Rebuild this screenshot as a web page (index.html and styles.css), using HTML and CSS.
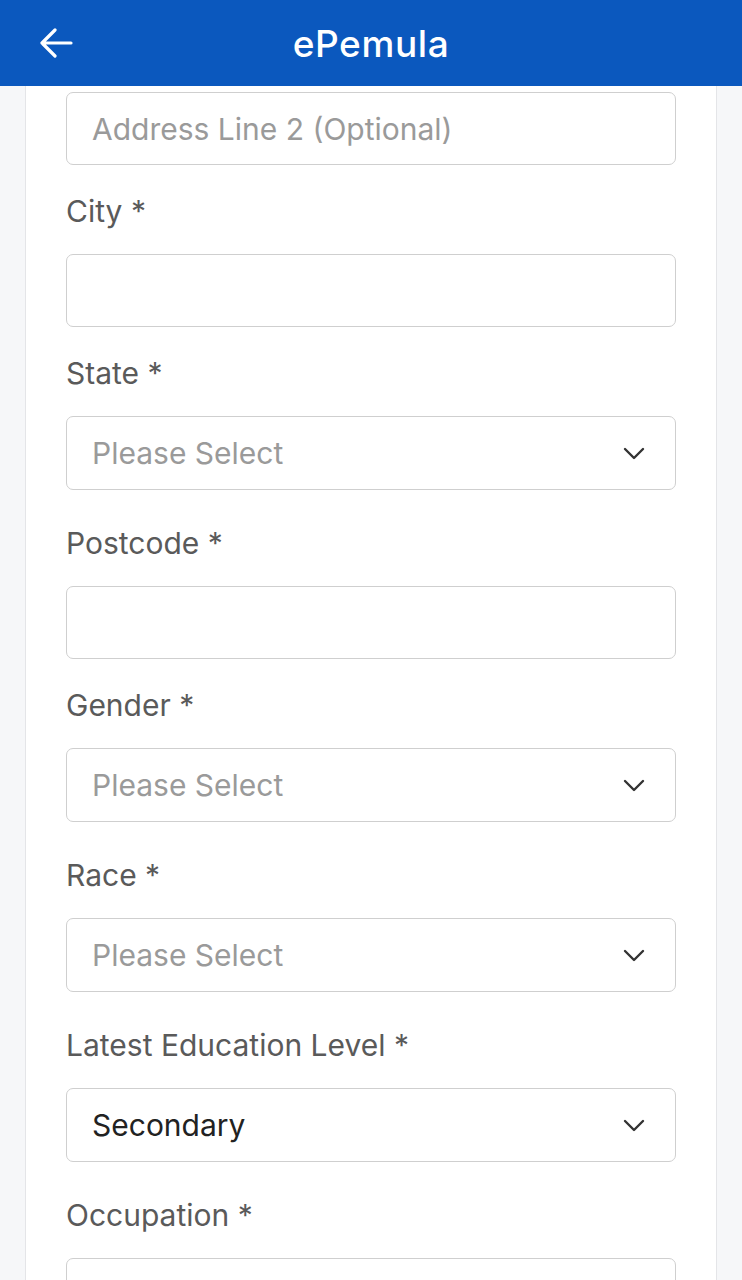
FILE: index.html
```html
<!DOCTYPE html>
<html lang="en">
<head>
<meta charset="utf-8">
<title>ePemula</title>
<link rel="stylesheet" href="styles.css">
</head>
<body>
<header class="appbar">
  <div class="appbar-left">
    <svg class="back" width="34" height="30" viewBox="0 0 34 30" aria-hidden="true">
      <path d="M3 15 H32 M16 2 L3 15 L16 28" fill="none" stroke="#fff" stroke-width="3.2" stroke-linecap="round" stroke-linejoin="round"/>
    </svg>
  </div>
  <div class="title">ePemula</div>
  <div></div>
</header>
<main class="card">
  <form class="form">
    <input class="control" type="text" placeholder="Address Line 2 (Optional)">

    <label class="label">City *</label>
    <input class="control" type="text">

    <label class="label">State *</label>
    <div class="control select"><span class="placeholder">Please Select</span><svg class="chev" width="22" height="13" viewBox="0 0 22 13"><path d="M2 2 L11 11 L20 2" fill="none" stroke="#333" stroke-width="2.4" stroke-linecap="round" stroke-linejoin="round"/></svg></div>

    <label class="label">Postcode *</label>
    <input class="control" type="text">

    <label class="label">Gender *</label>
    <div class="control select"><span class="placeholder">Please Select</span><svg class="chev" width="22" height="13" viewBox="0 0 22 13"><path d="M2 2 L11 11 L20 2" fill="none" stroke="#333" stroke-width="2.4" stroke-linecap="round" stroke-linejoin="round"/></svg></div>

    <label class="label">Race *</label>
    <div class="control select"><span class="placeholder">Please Select</span><svg class="chev" width="22" height="13" viewBox="0 0 22 13"><path d="M2 2 L11 11 L20 2" fill="none" stroke="#333" stroke-width="2.4" stroke-linecap="round" stroke-linejoin="round"/></svg></div>

    <label class="label">Latest Education Level *</label>
    <div class="control select"><span class="value">Secondary</span><svg class="chev" width="22" height="13" viewBox="0 0 22 13"><path d="M2 2 L11 11 L20 2" fill="none" stroke="#333" stroke-width="2.4" stroke-linecap="round" stroke-linejoin="round"/></svg></div>

    <label class="label">Occupation *</label>
    <input class="control" type="text">
  </form>
</main>
</body>
</html>
```
FILE: styles.css
```css
html, body {
  margin: 0;
  padding: 0;
  height: 1280px;
  overflow: hidden;
}
body {
  background: #f6f7f9;
  font-family: Inter, Roboto, "Liberation Sans", Arial, sans-serif;
}
.appbar {
  height: 86px;
  background: #0b58be;
  display: grid;
  grid-template-columns: 1fr auto 1fr;
  align-items: center;
}
.appbar-left {
  padding-left: 39px;
  display: flex;
  align-items: center;
}
.back { display: block; }
.title {
  color: #fff;
  font-size: 37px;
  font-weight: 500;
  letter-spacing: 0.6px;
}
.card {
  margin: 0 25px;
  background: #fff;
  border-left: 1px solid #e4e5e8;
  border-right: 1px solid #e4e5e8;
  padding: 6px 40px 0 40px;
  height: 1300px;
}
.form {
  display: flex;
  flex-direction: column;
}
.control {
  box-sizing: border-box;
  height: 73px;
  width: 100%;
  border: 1.5px solid #cfcfcf;
  border-radius: 7px;
  background: #fff;
  padding: 0 30px 0 25px;
  font-family: inherit;
  font-size: 30px;
  color: #222;
  outline: none;
  margin: 0;
}
.control::placeholder { color: #9a9a9a; }
.select {
  height: 74px;
  display: flex;
  align-items: center;
  justify-content: space-between;
  margin-bottom: 7px;
}
.placeholder { color: #9a9a9a; }
.value { color: #222; }
.chev { display: block; }
.label {
  font-size: 30px;
  line-height: 34px;
  color: #5a5a5a;
  margin-top: 29px;
  margin-bottom: 26px;
}
```
